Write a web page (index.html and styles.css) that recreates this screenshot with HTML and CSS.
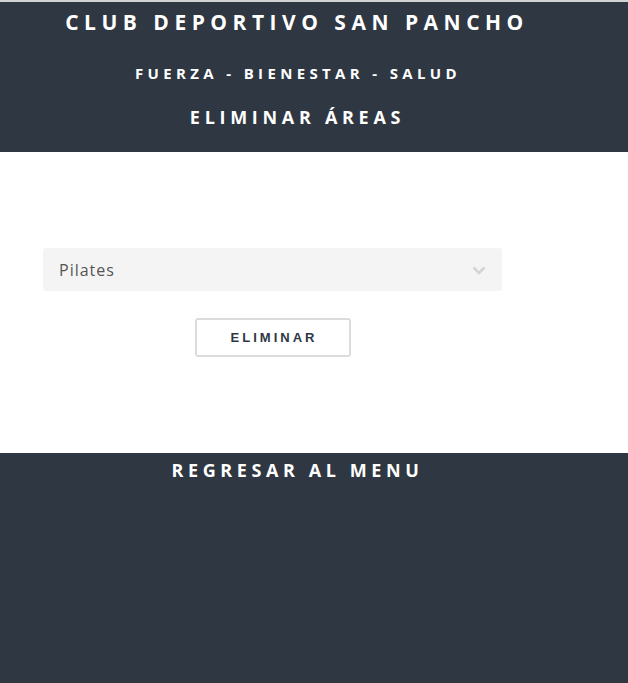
FILE: index.html
```html
<!DOCTYPE html>
<html lang="es">
<head>
<meta charset="utf-8">
<title>Eliminar Áreas</title>
<link rel="stylesheet" href="styles.css">
</head>
<body>
<header class="header">
  <div class="header-inner">
    <h1 class="title">CLUB DEPORTIVO SAN PANCHO</h1>
    <h2 class="subtitle">FUERZA - BIENESTAR - SALUD</h2>
    <h3 class="page-title">ELIMINAR ÁREAS</h3>
  </div>
</header>
<main class="content">
  <form class="form">
    <div class="select">
      <span class="select-value">Pilates</span>
      <svg class="chevron" width="14" height="9" viewBox="0 0 14 9"><path d="M1.5 1.5 L7 7 L12.5 1.5" fill="none" stroke="#d4d4d4" stroke-width="2.6"/></svg>
    </div>
    <button type="button" class="btn">ELIMINAR</button>
  </form>
</main>
<footer class="footer">
  <div class="footer-inner">
    <a class="back" href="#">REGRESAR AL MENU</a>
  </div>
</footer>
</body>
</html>
```
FILE: styles.css
```css
html, body {
  margin: 0;
  padding: 0;
  height: 100%;
}
body {
  display: flex;
  flex-direction: column;
  font-family: "Open Sans", "Liberation Sans", sans-serif;
  background: #2e3742;
}
.header {
  background: #2e3742;
  border-top: 2px solid #d2d2d2;
  height: 150px;
}
.header-inner {
  width: 592px;
  display: flex;
  flex-direction: column;
  align-items: center;
  color: #fff;
}
.title {
  margin: 5px 0 0;
  padding-left: 2px;
  font-size: 21px;
  font-weight: 700;
  letter-spacing: 5.5px;
  line-height: 30px;
}
.subtitle {
  margin: 24px 0 0;
  padding-left: 4px;
  font-size: 15px;
  font-weight: 700;
  letter-spacing: 4.35px;
  line-height: 24px;
}
.page-title {
  margin: 19px 0 0;
  padding-left: 3px;
  font-size: 18px;
  font-weight: 700;
  letter-spacing: 4.7px;
  line-height: 26px;
}
.content {
  background: #fff;
  height: 301px;
  box-sizing: border-box;
  padding-top: 96px;
}
.form {
  width: 459px;
  margin-left: 43px;
  display: flex;
  flex-direction: column;
  align-items: center;
  gap: 27px;
}
.select {
  width: 100%;
  height: 43px;
  box-sizing: border-box;
  background: #f4f4f4;
  border-radius: 3px;
  display: flex;
  align-items: center;
  justify-content: space-between;
  padding: 0 16px 0 16px;
}
.select-value {
  font-size: 16px;
  color: #555;
  letter-spacing: 1px;
}
.chevron {
  margin-top: 2px;
}
.btn {
  width: 156px;
  height: 39px;
  background: #fff;
  border: 2px solid #dcdcdc;
  border-radius: 3px;
  font-family: "Liberation Sans", Arial, sans-serif;
  font-weight: 700;
  font-size: 13px;
  letter-spacing: 3px;
  color: #2e3742;
  padding: 0 0 0 3px;
}
.footer {
  flex: 1;
  background: #2e3742;
}
.footer-inner {
  width: 592px;
  display: flex;
  justify-content: center;
}
.back {
  margin-top: 4px;
  padding-left: 3px;
  color: #fff;
  text-decoration: none;
  font-size: 18px;
  font-weight: 700;
  letter-spacing: 4.6px;
  line-height: 26px;
}
```
